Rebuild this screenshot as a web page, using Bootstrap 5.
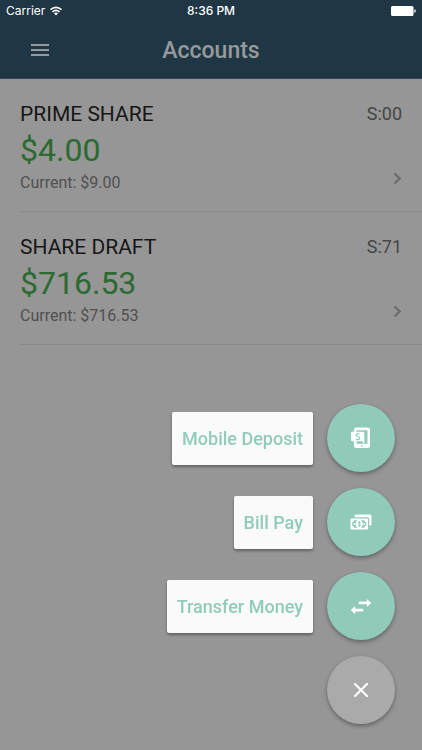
<!DOCTYPE html>
<html lang="en">
<head>
<meta charset="utf-8">
<meta name="viewport" content="width=device-width, initial-scale=1">
<title>Accounts</title>
<link href="https://cdn.jsdelivr.net/npm/bootstrap@5.3.0/dist/css/bootstrap.min.css" rel="stylesheet">
<style>
  body { background: #969696; font-family: Roboto, "Liberation Sans", sans-serif; color: #161616; }
  .app-header { background: #1f3644; border-bottom: 1px solid #344854; }
  .status-bar { height: 22px; padding: 0 6px; font: 500 12px/22px Inter, "Liberation Sans", sans-serif; color: #fff; }
  .status-bar .carrier { font-weight: 400; }
  .title-bar { height: 56px; padding: 2px 20px 0; color: #969a9d; }
  .title-bar h1 { font-size: 23px; line-height: 28px; font-weight: 500; }
  .menu-btn { width: 40px; height: 36px; color: inherit; }
  .account { color: inherit; padding: 22px 20px 18px 0; margin-left: 20px; border-bottom: 1px solid #8a8a8a; }
  .account-name { font-size: 21px; line-height: 26px; font-weight: 400; }
  .account-id { font-size: 18px; line-height: 26px; color: #454545; }
  .balance { font-size: 32px; line-height: 46px; color: #2b6a30; }
  .current { font-size: 16px; line-height: 20px; color: #505050; }
  .chevron { color: #6b6b6b; }
  .actions { right: 27px; bottom: 26px; gap: 16px; }
  .action { gap: 14px; }
  .action-label { background: #fafafa; color: #90cbbb; font-size: 18px; line-height: 21px; font-weight: 500; padding: 16px 10px; border-radius: 2px; box-shadow: 0 2px 3px rgba(0,0,0,.35); }
  .action-icon { width: 68px; height: 68px; background: #8fcaba; color: #fff; box-shadow: 0 2px 4px rgba(0,0,0,.35); }
  .action-close { background: #aaa; }
</style>
</head>
<body>
<header class="app-header">
  <div class="status-bar row g-0 align-items-center">
    <div class="col d-flex align-items-center gap-1">
      <span class="carrier">Carrier</span>
      <svg width="14" height="10" viewBox="0 0 14 10" fill="none" stroke="#fff" stroke-width="1.600" aria-hidden="true"><path d="M1.500 3.600Q7-1 12.500 3.600M3.500 5.800Q7 2.900 10.500 5.800"/><path d="M4.900 7.300Q7 5.700 9.100 7.300L7 9.500Z" fill="#fff" stroke="none"/></svg>
    </div>
    <div class="col-auto">8:36 PM</div>
    <div class="col d-flex justify-content-end">
      <svg width="25" height="10" viewBox="0 0 25 10" fill="#fff" aria-hidden="true"><rect width="22.500" height="10" rx="1.500"/><path d="M23.300 3.200q1.500.3 1.500 1.800t-1.500 1.800z"/></svg>
    </div>
  </div>
  <div class="title-bar row g-0 align-items-center">
    <div class="col">
      <button class="menu-btn btn p-0 border-0 d-flex align-items-center justify-content-center" type="button" aria-label="Menu">
        <svg width="18" height="14" viewBox="0 0 18 14" fill="currentColor" aria-hidden="true"><path d="M0 0h18v2H0zM0 5h18v2H0zM0 10h18v2H0z"/></svg>
      </button>
    </div>
    <h1 class="col-auto mb-0">Accounts</h1>
    <div class="col"></div>
  </div>
</header>

<main>
  <a class="account d-block text-decoration-none" href="#prime-share">
    <div class="d-flex justify-content-between">
      <h2 class="account-name mb-0">PRIME SHARE</h2>
      <span class="account-id">S:00</span>
    </div>
    <div class="balance">$4.00</div>
    <div class="d-flex justify-content-between align-items-start">
      <span class="current">Current: $9.00</span>
      <svg class="chevron" width="9" height="12" viewBox="0 0 9 12" fill="none" stroke="currentColor" stroke-width="2.200" aria-hidden="true"><path d="M1.500.5 6.700 5.500l-5.200 5"/></svg>
    </div>
  </a>
  <a class="account d-block text-decoration-none" href="#share-draft">
    <div class="d-flex justify-content-between">
      <h2 class="account-name mb-0">SHARE DRAFT</h2>
      <span class="account-id">S:71</span>
    </div>
    <div class="balance">$716.53</div>
    <div class="d-flex justify-content-between align-items-start">
      <span class="current">Current: $716.53</span>
      <svg class="chevron" width="9" height="12" viewBox="0 0 9 12" fill="none" stroke="currentColor" stroke-width="2.200" aria-hidden="true"><path d="M1.500.5 6.700 5.500l-5.200 5"/></svg>
    </div>
  </a>
</main>

<nav class="actions position-fixed d-flex flex-column align-items-end" aria-label="Quick actions">
  <button class="action btn p-0 border-0 d-flex align-items-center" type="button">
    <span class="action-label">Mobile Deposit</span>
    <span class="action-icon rounded-circle d-flex align-items-center justify-content-center">
      <svg width="20" height="22" viewBox="0 0 20 22" aria-hidden="true"><path fill="#fff" fill-rule="evenodd" d="M5.500.5h11q2.500 0 2.500 2.500v15.500q0 2.500-2.500 2.500h-11Q3 21 3 18.500V3Q3 .5 5.500.5zM5.500 3.200v13.500h11V3.200z"/><path fill="#fff" d="M1.500 4.800H12q1.300 0 1.300 1.300v10.500l-2.600-2.300H1.500Q0 14.300 0 12.800V6.200q0-1.400 1.500-1.400z"/><path fill="none" stroke="#8fcaba" stroke-width="1.100" d="M8.600 7.400Q7.900 6.700 6.700 6.700 5 6.700 5 8q0 1 1.800 1.500 2 .5 2 1.700 0 1.300-1.900 1.300-1.400 0-2.100-.8M6.800 5.700v1M6.800 12.500v1"/><circle cx="11" cy="18.800" r=".9" fill="#8fcaba"/></svg>
    </span>
  </button>
  <button class="action btn p-0 border-0 d-flex align-items-center" type="button">
    <span class="action-label">Bill Pay</span>
    <span class="action-icon rounded-circle d-flex align-items-center justify-content-center">
      <svg width="22" height="16" viewBox="0 0 22 16" aria-hidden="true"><path fill="#fff" d="M5.500.5H20q1.500 0 1.500 1.500v8.500q0 1-1 1h-1.300V5q0-1.700-1.700-1.700h-13V1.500q0-1 1-1z"/><rect x=".5" y="4.500" width="17.500" height="11" rx="1.200" fill="#fff"/><path fill="#8fcaba" d="M4.200 6.300h3.300Q5.600 7.800 5.600 10t1.900 3.700H4.200q0-1.800-2-1.900V8.200q2-.1 2-1.900zM14.300 6.300H11q1.900 1.500 1.900 3.700T11 13.700h3.300q0-1.800 2-1.900V8.200q-2-.1-2-1.900z"/><circle cx="4.300" cy="10" r="1" fill="#fff"/><circle cx="14.200" cy="10" r="1" fill="#fff"/><path fill="none" stroke="#8fcaba" stroke-width=".9" d="M10.500 8.500Q10 8 9.200 8 8 8 8 8.900t1.300 1.100q1.300.2 1.300 1.100 0 .9-1.400.9-.8 0-1.300-.5M9.250 7v6"/></svg>
    </span>
  </button>
  <button class="action btn p-0 border-0 d-flex align-items-center" type="button">
    <span class="action-label">Transfer Money</span>
    <span class="action-icon rounded-circle d-flex align-items-center justify-content-center">
      <svg width="22" height="17" viewBox="0 0 22 17" fill="#fff" aria-hidden="true"><path d="M8.800 3.600h8V.9L21.300 5l-4.500 4.100V6.300h-8zM13.200 10.700h-8V8L.7 12.100l4.500 4.100v-2.700h8z"/></svg>
    </span>
  </button>
  <button class="action btn p-0 border-0 d-flex align-items-center" type="button" aria-label="Close">
    <span class="action-icon action-close rounded-circle d-flex align-items-center justify-content-center">
      <svg width="16" height="16" viewBox="0 0 16 16" fill="none" stroke="#fff" stroke-width="2.200" stroke-linecap="round" aria-hidden="true"><path d="M2 2l12 12M14 2 2 14"/></svg>
    </span>
  </button>
</nav>
<script src="https://cdn.jsdelivr.net/npm/bootstrap@5.3.0/dist/js/bootstrap.bundle.min.js"></script>
</body>
</html>
